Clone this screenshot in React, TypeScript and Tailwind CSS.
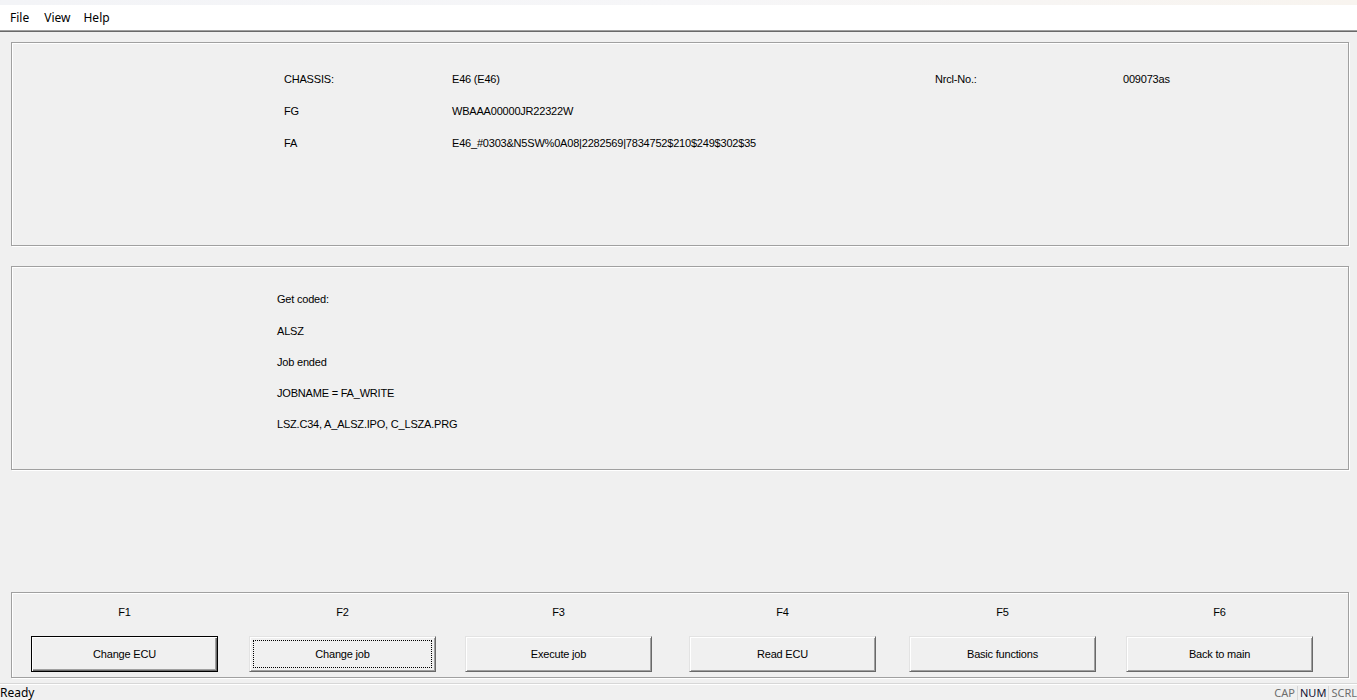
import React from "react";

const sans = "font-['Liberation_Sans',Arial,sans-serif]";
const ui = "font-['Segoe_UI','Noto_Sans',sans-serif]";

const etched =
  "border border-[#a0a0a0] shadow-[inset_1px_1px_0_#ffffff,1px_1px_0_#ffffff]";

const buttons = [
  { key: "F1", label: "Change ECU", ml: "ml-[19px]", kind: "default" },
  { key: "F2", label: "Change job", ml: "ml-[31px]", kind: "focus" },
  { key: "F3", label: "Execute job", ml: "ml-[29px]", kind: "normal" },
  { key: "F4", label: "Read ECU", ml: "ml-[37px]", kind: "normal" },
  { key: "F5", label: "Basic functions", ml: "ml-[33px]", kind: "normal" },
  { key: "F6", label: "Back to main", ml: "ml-[30px]", kind: "normal" },
];

const logLines = [
  "Get coded:",
  "ALSZ",
  "Job ended",
  "JOBNAME = FA_WRITE",
  "LSZ.C34, A_ALSZ.IPO, C_LSZA.PRG",
];

function WinButton({ label, kind }: { label: string; kind: string }) {
  if (kind === "default") {
    return (
      <div className="w-[187px] h-[36px] border border-black shadow-[inset_1px_1px_0_#ffffff,inset_-1px_-1px_0_#696969,inset_-2px_-2px_0_#a0a0a0] bg-[#f0f0f0] flex items-center justify-center">
        {label}
      </div>
    );
  }
  return (
    <div className="w-[187px] h-[36px] border border-t-[#e3e3e3] border-l-[#e3e3e3] border-b-[#696969] border-r-[#696969] shadow-[inset_1px_1px_0_#ffffff,inset_-1px_-1px_0_#a0a0a0] bg-[#f0f0f0] flex items-center justify-center p-[3px]">
      <div
        className={`w-full h-full flex items-center justify-center ${
          kind === "focus" ? "border border-dotted border-black" : ""
        }`}
      >
        {label}
      </div>
    </div>
  );
}

export default function App() {
  return (
    <div className="w-[1357px] h-[700px] bg-[#f0f0f0] flex flex-col overflow-hidden text-black">
      {/* title bar remnant */}
      <div className="h-[5px] bg-gradient-to-r from-[#f3f4f7] via-[#f6f6f8] to-[#f8f4ef]" />

      {/* menu */}
      <div className={`h-[25px] bg-white flex items-center pl-[10px] pt-[1px] text-[12px] ${ui}`}>
        <span>File</span>
        <span className="ml-[15px]">View</span>
        <span className="ml-[13px]">Help</span>
      </div>
      <div className="h-[1px] bg-[#a0a0a0]" />
      <div className="h-[1px] bg-[#696969]" />

      {/* main area */}
      <div className={`flex-1 flex flex-col pl-[11px] pr-[8px] pt-[10px] text-[11px] tracking-[-0.2px] ${sans}`}>
        {/* vehicle info */}
        <div className={`h-[204px] ${etched} pt-[20px] pl-[272px]`}>
          <div className="h-[32px] flex items-center">
            <span className="w-[168px]">CHASSIS:</span>
            <span className="w-[483px]">E46 (E46)</span>
            <span className="w-[188px]">Nrcl-No.:</span>
            <span>009073as</span>
          </div>
          <div className="h-[32px] flex items-center">
            <span className="w-[168px]">FG</span>
            <span>WBAAA00000JR22322W</span>
          </div>
          <div className="h-[32px] flex items-center">
            <span className="w-[168px]">FA</span>
            <span>E46_#0303&amp;N5SW%0A08|2282569|7834752$210$249$302$35</span>
          </div>
        </div>

        {/* job log */}
        <div className={`h-[204px] mt-[20px] ${etched} pt-[17px] pl-[265px]`}>
          {logLines.map((l) => (
            <div key={l} className="h-[31.25px] flex items-center">
              {l}
            </div>
          ))}
        </div>

        <div className="flex-1" />

        {/* function keys */}
        <div className={`h-[86px] mb-[5px] ${etched}`}>
          <div className="flex pt-[12px]">
            {buttons.map((b) => (
              <div key={b.key} className={`${b.ml} flex flex-col items-center`}>
                <div className="h-[14px] leading-[14px] w-[187px] text-center">{b.key}</div>
                <div className="mt-[17px]">
                  <WinButton label={b.label} kind={b.kind} />
                </div>
              </div>
            ))}
          </div>
        </div>
      </div>

      {/* status bar */}
      <div className={`h-[17px] border-t border-[#d7d7d7] shadow-[inset_0_1px_0_#ffffff] flex items-end text-[12px] leading-[14px] ${ui}`}>
        <span className="flex-1">Ready</span>
        <span className="pl-[2px] pr-[2px] text-[11px] text-[#6d6d6d] border-r border-[#d7d7d7]">CAP</span>
        <span className="pl-[2px] pr-[2px] text-[11px] text-[#101030] border-r border-[#d7d7d7]">NUM</span>
        <span className="pl-[2px] text-[11px] text-[#6d6d6d]">SCRL</span>
      </div>
    </div>
  );
}
